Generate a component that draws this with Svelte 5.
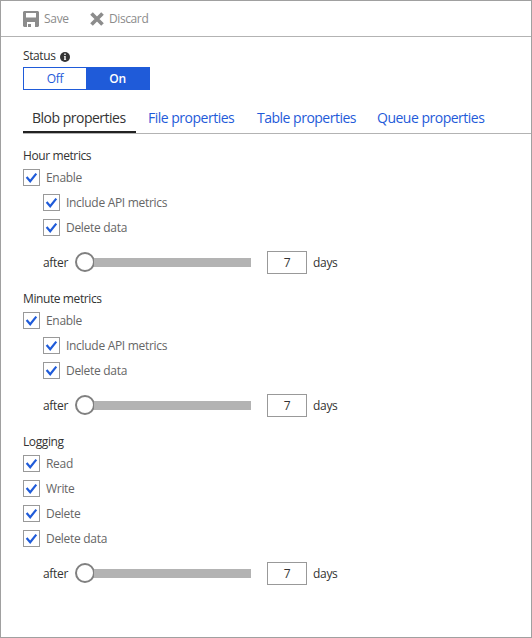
<script>
  const tabs = [
    { label: 'Blob properties', width: 94 },
    { label: 'File properties', width: 88 },
    { label: 'Table properties', width: 99 },
    { label: 'Queue properties', width: 108 },
  ];
  const metrics = [
    { label: 'Enable' },
    { label: 'Include API metrics', nested: true },
    { label: 'Delete data', nested: true },
  ];
  const sections = [
    { title: 'Hour metrics', options: metrics },
    { title: 'Minute metrics', options: metrics },
    {
      title: 'Logging',
      options: [{ label: 'Read' }, { label: 'Write' }, { label: 'Delete' }, { label: 'Delete data' }],
    },
  ];
</script>

<main class="panel">
  <header class="toolbar">
    <div class="command save">
      <svg width="16" height="16" viewBox="0 0 16 16">
        <path fill="#8c8c8c" fill-rule="evenodd" d="M1 0H15L16 1V15L15 16H12V11H4V16H1L0 15V1ZM3 2V6.5H13V2Z" />
        <path fill="#8c8c8c" d="M5 13H8V16H5Z" />
      </svg>
      <span>Save</span>
    </div>
    <div class="command discard">
      <svg width="14" height="14" viewBox="0 0 14 14">
        <path d="M1.5 1.5L12.5 12.5M12.5 1.5L1.5 12.5" stroke="#8c8c8c" stroke-width="3.7" />
      </svg>
      <span>Discard</span>
    </div>
  </header>

  <div class="content">
    <div class="status">
      <span>Status</span>
      <svg width="10" height="10" viewBox="0 0 10 10">
        <circle cx="5" cy="5" r="5" fill="#333" />
        <path fill="#fff" d="M4.3 1.6h1.4v1.4H4.3zM3.9 4h1.8v3.4h.5V8H3.9v-.6h.4V4.6h-.4z" />
      </svg>
    </div>
    <div class="toggle">
      <div class="off">Off</div>
      <div class="on">On</div>
    </div>

    <nav>
      {#each tabs as tab, i}
        <div class="tab" class:active={i === 0}><span style:width="{tab.width}px">{tab.label}</span></div>
      {/each}
    </nav>

    {#each sections as section}
      <section>
        <h2>{section.title}</h2>
        {#each section.options as option}
          <div class="option" class:nested={option.nested}>
            <span class="box">
              <svg width="15" height="15" viewBox="0 0 15 15">
                <path d="M2.6 7L6.2 11.2L12.3 3.6" fill="none" stroke="#1f5bd9" stroke-width="2.2" />
              </svg>
            </span>
            <span>{option.label}</span>
          </div>
        {/each}
        <div class="retention">
          <span class="after">after</span>
          <div class="slider"><span class="knob"></span><span class="track"></span></div>
          <div class="number">7</div>
          <span>days</span>
        </div>
      </section>
    {/each}
  </div>
</main>

<style>
  .panel {
    box-sizing: border-box;
    width: 532px;
    height: 638px;
    border: 1px solid #a0a0a0;
    background: #fff;
    color: #333;
    font: 12px/16px 'Open Sans', 'Noto Sans', sans-serif;
    letter-spacing: -0.3px;
    white-space: nowrap;
    overflow: hidden;
  }
  svg { display: block; flex: none; }
  .toolbar {
    display: flex;
    align-items: center;
    height: 35px;
    padding-left: 22px;
    border-bottom: 1px solid #b3b3b3;
    color: #8c8c8c;
  }
  .command { display: flex; align-items: center; }
  .save { width: 67px; gap: 5px; }
  .discard { gap: 5px; letter-spacing: -0.4px; }
  .content { padding-left: 22px; }
  .status { display: flex; align-items: center; height: 16px; margin-top: 11px; }
  .status span { width: 37px; letter-spacing: -0.4px; }
  .status svg { margin-top: 2px; }
  .toggle {
    box-sizing: border-box;
    display: flex;
    width: 127px;
    height: 23px;
    margin-top: 3px;
    border: 1px solid #1f5bd9;
    line-height: 21px;
    text-align: center;
  }
  .off { width: 62px; color: #1f5bd9; }
  .on { flex: 1; background: #1f5bd9; color: #fff; font-weight: 600; }
  nav {
    display: flex;
    gap: 3px;
    height: 26px;
    margin-top: 17px;
    border-bottom: 1px solid #b3b3b3;
    color: #1f5bd9;
    font-size: 14px;
    line-height: 22px;
    letter-spacing: -0.5px;
  }
  .tab { box-sizing: border-box; height: 26px; padding: 0 9px; }
  .tab span { display: block; }
  .active { padding-right: 10px; border-bottom: 2px solid #222; color: #333; }
  section { margin-top: 14px; }
  section + section { margin-top: 17px; }
  h2 { margin: 0 0 5px; font-size: 12px; font-weight: 400; line-height: 16px; letter-spacing: -0.4px; }
  .option { display: flex; align-items: center; gap: 6px; height: 17px; margin-bottom: 8px; color: #666; }
  .nested { margin-left: 20px; }
  .box { box-sizing: border-box; width: 17px; height: 17px; border: 1px solid #999; }
  .retention { display: flex; align-items: center; height: 23px; margin: 15px 0 0 20px; }
  .after { width: 32px; }
  .slider { display: flex; align-items: center; width: 176px; }
  .knob { box-sizing: border-box; width: 20px; height: 20px; margin-bottom: 1px; border: 2px solid #808080; border-radius: 50%; background: #fff; }
  .track { flex: 1; height: 9px; margin-left: -1px; background: #b3b3b3; }
  .number {
    box-sizing: border-box;
    width: 40px;
    height: 23px;
    margin: 0 6px 0 16px;
    border: 1px solid #999;
    line-height: 21px;
    text-align: center;
  }
</style>
